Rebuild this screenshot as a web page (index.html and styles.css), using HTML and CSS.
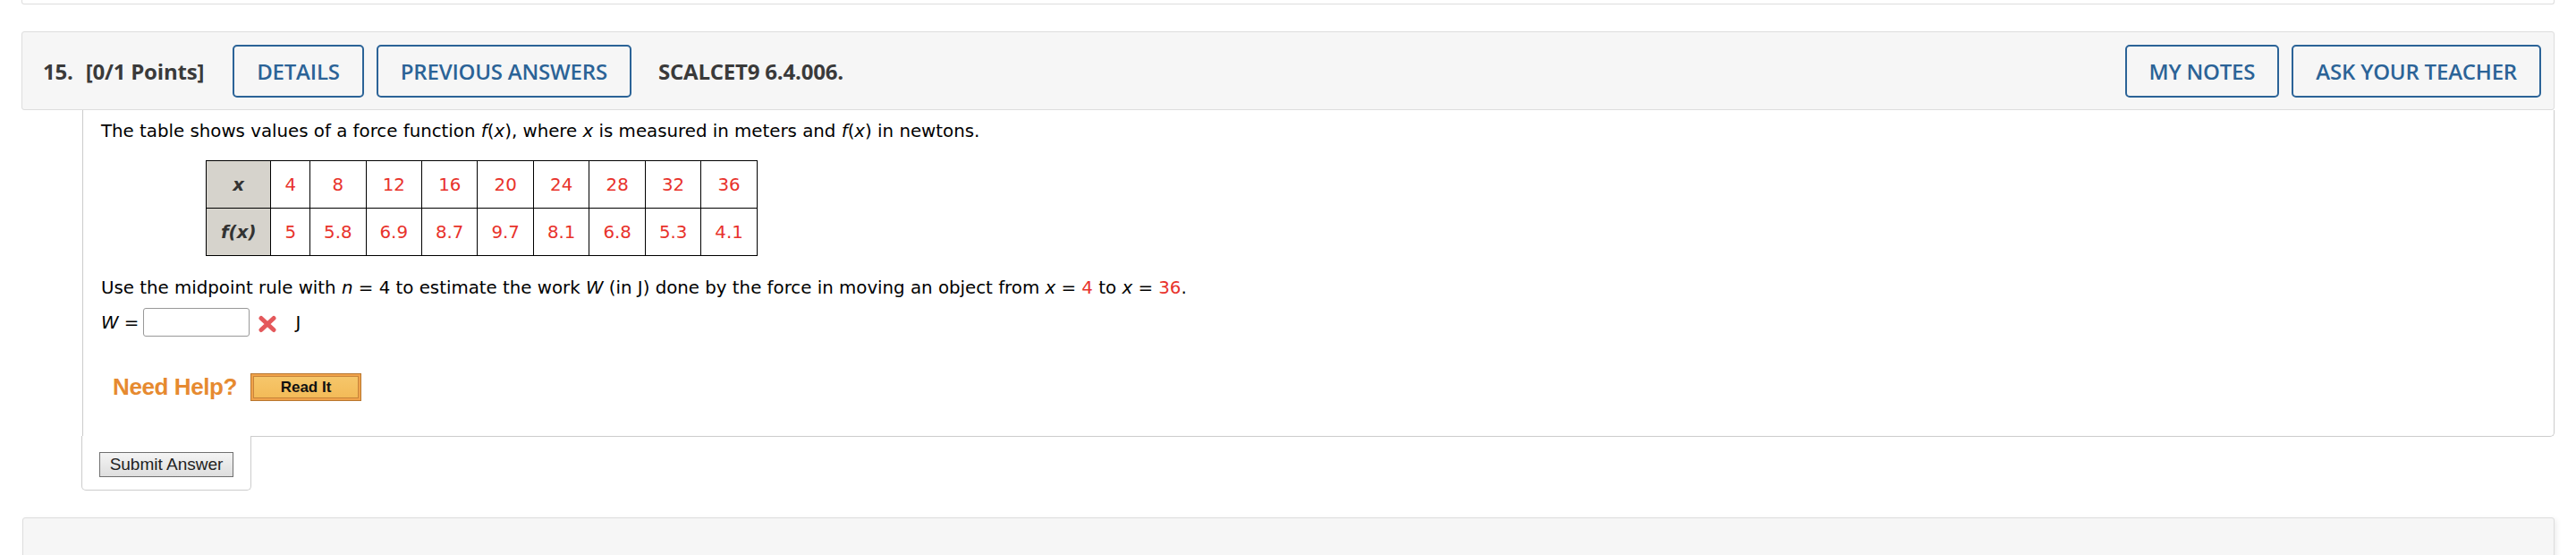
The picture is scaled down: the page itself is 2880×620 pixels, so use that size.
FILE: index.html
```html
<!DOCTYPE html>
<html lang="en">
<head>
<meta charset="utf-8">
<title>Question 15</title>
<link rel="stylesheet" href="styles.css">
</head>
<body>
<div class="prev-card"></div>

<section class="question">
  <header class="qhead">
    <div class="qhead-left">
      <span class="qnum">15.</span>
      <span class="qpoints">[0/1 Points]</span>
      <button class="hbtn hbtn-details">DETAILS</button>
      <button class="hbtn">PREVIOUS ANSWERS</button>
      <span class="qcode">SCALCET9 6.4.006.</span>
    </div>
    <div class="qhead-right">
      <button class="hbtn">MY NOTES</button>
      <button class="hbtn">ASK YOUR TEACHER</button>
    </div>
  </header>

  <div class="qbody">
    <p class="qtext">The table shows values of a force function <i>f</i>(<i>x</i>), where <i>x</i> is measured in meters and <i>f</i>(<i>x</i>) in newtons.</p>

    <table class="data">
      <tr>
        <th><i>x</i></th>
        <td>4</td><td>8</td><td>12</td><td>16</td><td>20</td><td>24</td><td>28</td><td>32</td><td>36</td>
      </tr>
      <tr>
        <th><i>f</i>(<i>x</i>)</th>
        <td>5</td><td>5.8</td><td>6.9</td><td>8.7</td><td>9.7</td><td>8.1</td><td>6.8</td><td>5.3</td><td>4.1</td>
      </tr>
    </table>

    <p class="qtext qtext-2">Use the midpoint rule with <i>n</i> = 4 to estimate the work <i>W</i> (in J) done by the force in moving an object from <i>x</i> = <span class="red">4</span> to <i>x</i> = <span class="red">36</span>.</p>

    <div class="answer">
      <span class="answer-label"><i>W</i> =</span>
      <input class="answer-input" type="text" aria-label="W">
      <svg class="wrong" width="22" height="20" viewBox="0 0 22 20" aria-hidden="true">
        <path d="M4 3.5 L18 16.5 M18 3.5 L4 16.5" stroke="#e4585b" stroke-width="5" stroke-linecap="round"/>
      </svg>
      <span class="unit">J</span>
    </div>

    <div class="help">
      <span class="help-label">Need Help?</span>
      <button class="read-it"><span class="read-it-inner">Read It</span></button>
    </div>
  </div>

  <div class="submit-box">
    <button class="submit">Submit Answer</button>
  </div>
</section>

<div class="next-card"></div>
</body>
</html>
```

FILE: styles.css
```css
html, body {
  margin: 0;
  padding: 0;
  background: #ffffff;
}

body {
  font-family: "DejaVu Sans", Verdana, sans-serif;
  color: #000;
  overflow: hidden;
}

.prev-card {
  margin: 0 24px;
  height: 4px;
  border: 1px solid #dddddd;
  border-top: none;
  border-radius: 0 0 3px 3px;
}

.question {
  margin: 30px 24px 0 24px;
}

.qhead {
  box-sizing: border-box;
  height: 88px;
  background: #f6f6f6;
  border: 1px solid #dddddd;
  border-radius: 3px;
  display: flex;
  align-items: center;
  justify-content: space-between;
  padding: 0 14px 0 23px;
  font-family: "Open Sans", "Noto Sans", sans-serif;
  color: #3a3a3a;
}

.qhead-left,
.qhead-right {
  display: flex;
  align-items: center;
}

.qnum,
.qpoints,
.qcode {
  font-size: 24px;
  font-weight: 700;
  letter-spacing: -0.2px;
}

.qnum { margin-right: 14px; }
.qpoints { margin-right: 32px; }
.qcode { margin-left: 30px; }

.hbtn {
  box-sizing: border-box;
  height: 59px;
  padding: 0 25px;
  background: #f6f6f6;
  border: 2px solid #2b6397;
  border-radius: 5px;
  color: #2b6397;
  font-family: "Open Sans", "Noto Sans", sans-serif;
  font-size: 24px;
  font-weight: 600;
  letter-spacing: -0.2px;
  cursor: pointer;
}

.hbtn + .hbtn { margin-left: 14px; }

.qbody {
  margin-left: 68px;
  border: 1px solid #cccccc;
  border-top: none;
  border-radius: 0 0 5px 0;
  padding: 10px 20px 39px 20px;
}

.qtext {
  margin: 0;
  font-size: 19.8px;
  line-height: 27px;
}

.red { color: #e8322b; }

.data {
  border-collapse: collapse;
  margin: 19px 0 0 117px;
  font-size: 19.8px;
}

.data th,
.data td {
  border: 1px solid #000;
  height: 52px;
  padding: 0 15px;
  text-align: center;
  vertical-align: middle;
}

.data th {
  background: #d6d3cc;
  color: #333;
  font-weight: 700;
  font-style: italic;
  padding: 0 16px;
}

.data td { color: #e8322b; }

.qtext-2 { margin-top: 22px; }

.answer {
  display: flex;
  align-items: center;
  margin-top: 9px;
  height: 32px;
  font-size: 19.8px;
}

.answer-label { margin-right: 5px; }

.answer-input {
  box-sizing: border-box;
  width: 119px;
  height: 32px;
  border: 1px solid #999;
  border-radius: 3px;
  background: #fff;
  margin: 0;
  padding: 0 4px;
  font-size: 17px;
}

.wrong {
  margin-left: 9px;
  margin-top: 4px;
}

.unit {
  margin-left: 20px;
}

.help {
  display: flex;
  align-items: center;
  margin-top: 41px;
  padding-left: 13px;
  height: 31px;
}

.help-label {
  font-family: "Liberation Sans", Arial, sans-serif;
  font-size: 26px;
  font-weight: 700;
  color: #e68a30;
  letter-spacing: -0.4px;
  margin-right: 15px;
}

.read-it {
  box-sizing: border-box;
  width: 124px;
  height: 31px;
  padding: 2px;
  margin: 0;
  border: 1px solid #b8772f;
  background: #f0a24a;
  cursor: pointer;
  display: flex;
}

.read-it-inner {
  flex: 1;
  display: flex;
  align-items: center;
  justify-content: center;
  border: 1px solid #c8843a;
  background: linear-gradient(#f6c66a, #f3bb58);
  font-family: "Liberation Sans", Arial, sans-serif;
  font-size: 17px;
  font-weight: 700;
  color: #111;
}

.submit-box {
  position: relative;
  width: 190px;
  box-sizing: border-box;
  margin-left: 67px;
  margin-top: -1px;
  background: #fff;
  border: 1px solid #cccccc;
  border-top: none;
  border-radius: 0 0 5px 5px;
  padding: 18px 0 14px 19px;
}

.submit {
  box-sizing: border-box;
  width: 150px;
  height: 28px;
  margin: 0;
  padding: 0;
  border: 1px solid #707070;
  background: linear-gradient(#f4f4f4, #dedede);
  font-family: "Liberation Sans", Arial, sans-serif;
  font-size: 19px;
  color: #222;
  cursor: pointer;
}

.next-card {
  margin: 30px 24px 0 25px;
  height: 80px;
  background: #f6f6f6;
  border: 1px solid #dddddd;
  border-radius: 3px;
  box-shadow: 2px 2px 6px rgba(0, 0, 0, 0.08);
}
```
